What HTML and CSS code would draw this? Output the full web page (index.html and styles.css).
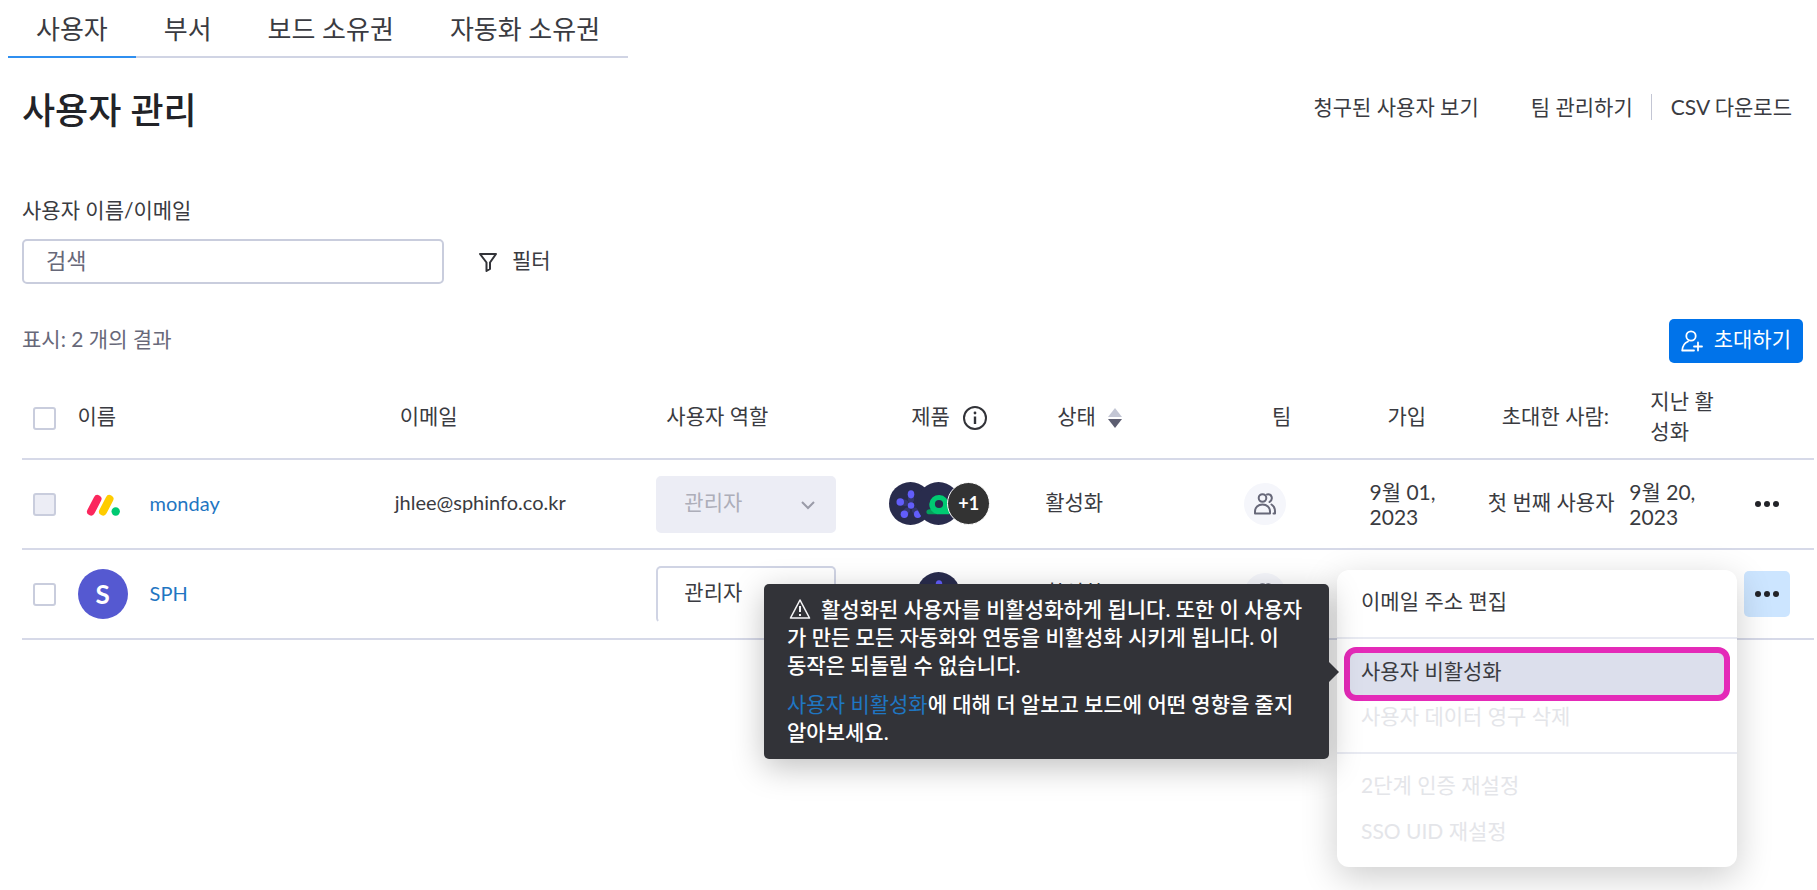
FILE: index.html
```html
<!DOCTYPE html>
<html lang="ko">
<head>
<meta charset="utf-8">
<title>사용자 관리</title>
<link rel="stylesheet" href="styles.css">
</head>
<body>
<svg class="defs" aria-hidden="true">
  <symbol id="flower" viewBox="0 0 42 42">
    <circle cx="21" cy="21" r="21" fill="#292c4d"/>
    <g stroke-width="6" stroke-linecap="round" stroke="#34376f">
      <path d="M21.500 13v4M12 19.500l4 1M15.500 31l2-3M27.500 31l-2-3"/>
    </g>
    <g fill="#625dfb">
      <ellipse cx="21.500" cy="12" rx="3.200" ry="4"/>
      <circle cx="11" cy="19.500" r="3.700"/>
      <circle cx="21.500" cy="23" r="3.200"/>
      <circle cx="15" cy="31.500" r="3.600"/>
      <circle cx="28" cy="31.500" r="3.600"/>
    </g>
  </symbol>
  <symbol id="people" viewBox="0 0 24 24">
    <g fill="none" stroke="#676879" stroke-width="2" stroke-linejoin="round" stroke-linecap="round">
      <circle cx="9.500" cy="6" r="3.800"/>
      <path d="M2 21.500v-2c0-4 3-7 7.500-7s7.500 3 7.500 7v2zM14 2.400c5-1 6.500 5 2.500 7.600M18.500 12.500c2.500 1.500 3.500 3.800 3.500 7v2h-1.500"/>
    </g>
  </symbol>
</svg>

<nav class="tabs">
  <a class="tab tab-active" href="#users">사용자</a>
  <a class="tab" href="#departments">부서</a>
  <a class="tab" href="#boards">보드 소유권</a>
  <a class="tab" href="#automations">자동화 소유권</a>
</nav>

<main class="page">
  <header class="head">
    <h1 class="title">사용자 관리</h1>
    <div class="links">
      <a class="link link-billed" href="#billed">청구된 사용자 보기</a>
      <a class="link" href="#teams">팀 관리하기</a>
      <a class="link link-csv" href="#csv">CSV 다운로드</a>
    </div>
  </header>

  <section class="search">
    <label class="search-label" for="q">사용자 이름/이메일</label>
    <div class="search-row">
      <input class="search-input" id="q" type="text" placeholder="검색">
      <button class="filter" type="button">
        <svg width="20" height="22" viewBox="0 0 20 22" fill="none" stroke="#323338" stroke-width="2" stroke-linejoin="round"><path d="M2 3h16l-6 8.500v6.500l-3.500 2v-8.500z"/></svg>
        필터
      </button>
    </div>
  </section>

  <div class="results">
    <p class="count">표시: 2 개의 결과</p>
    <button class="invite" type="button">
      <svg width="22" height="22" viewBox="0 0 22 22" fill="none" stroke="#fff" stroke-width="1.800" stroke-linecap="round" stroke-linejoin="round"><circle cx="10" cy="6" r="4.700"/><path d="M7 11.500C3.500 13 1.500 16 1.200 20.500H13M17 12.500v8M13 16.500h8"/></svg>
      초대하기
    </button>
  </div>

  <table class="users">
    <colgroup>
      <col class="c-check"><col class="c-name"><col class="c-email"><col class="c-role"><col class="c-product"><col class="c-status"><col class="c-team"><col class="c-joined"><col class="c-inviter"><col class="c-last"><col class="c-menu">
    </colgroup>
    <thead>
      <tr>
        <th class="check-cell"><input class="check" type="checkbox" aria-label="모두 선택"></th>
        <th>이름</th>
        <th class="h-email">이메일</th>
        <th class="h-role">사용자 역할</th>
        <th class="h-product"><span class="with-icon">제품
          <svg width="26" height="26" viewBox="0 0 26 26" fill="none" stroke="#323338" stroke-width="2"><circle cx="13" cy="13" r="11"/><path d="M13 11.500v7.500" stroke-width="2.400"/><circle cx="13" cy="8" r="1.400" fill="#323338" stroke="none"/></svg></span></th>
        <th class="h-status"><span class="with-icon">상태
          <svg width="14" height="20" viewBox="0 0 14 20"><path d="M0 9 7 0l7 9z" fill="#c3c6d4"/><path d="M0 11h14l-7 9z" fill="#5c5d70"/></svg></span></th>
        <th class="h-team">팀</th>
        <th class="h-joined">가입</th>
        <th class="h-inviter">초대한 사람:</th>
        <th class="h-last">지난 활<br>성화</th>
        <th></th>
      </tr>
    </thead>
    <tbody>
      <tr>
        <td class="check-cell"><input class="check" type="checkbox" aria-label="monday 선택" disabled></td>
        <td><div class="person">
          <svg class="logo" width="50" height="50" viewBox="0 0 50 50" fill="none" stroke-width="8" stroke-linecap="round"><path d="M13 32.500 19.500 20" stroke="#fb275d"/><path d="M25 32.500 31.500 20" stroke="#fc0"/><circle cx="37.700" cy="32.500" r="4.200" fill="#00ca72"/></svg>
          <a class="name" href="#monday">monday</a></div></td>
        <td class="text email">jhlee@sphinfo.co.kr</td>
        <td><div class="role">
          <select class="role-select" aria-label="monday 역할" disabled><option>관리자</option></select>
          <svg class="chevron" width="14" height="9" viewBox="0 0 14 9" fill="none" stroke="#9a9ba8" stroke-width="2"><path d="m1 1 6 6 6-6"/></svg></div></td>
        <td><div class="products">
          <svg class="product" viewBox="0 0 42 42"><use href="#flower"/></svg>
          <svg class="product" viewBox="0 0 42 42"><circle cx="21" cy="21" r="21" fill="#292c4d"/><path d="M11 31.500c-3-1-2-5 1-5h8v5z" fill="#04a05c"/><path d="M32 31.500H20a9.500 9.500 0 1 1 11-9.500z" fill="#00ca72"/><circle cx="21.500" cy="21.500" r="4" fill="#292c4d"/></svg>
          <span class="more">+1</span></div></td>
        <td class="text">활성화</td>
        <td><span class="team"><svg width="24" height="24"><use href="#people"/></svg></span></td>
        <td class="date">9월 01,<br>2023</td>
        <td class="text">첫 번째 사용자</td>
        <td class="date">9월 20,<br>2023</td>
        <td><button class="dots" type="button" aria-label="메뉴"><svg width="26" height="8" viewBox="0 0 26 8" fill="#222328"><circle cx="4" cy="4" r="3"/><circle cx="13" cy="4" r="3"/><circle cx="22" cy="4" r="3"/></svg></button></td>
      </tr>
      <tr>
        <td class="check-cell"><input class="check" type="checkbox" aria-label="SPH 선택"></td>
        <td><div class="person"><span class="avatar">S</span><a class="name" href="#sph">SPH</a></div></td>
        <td></td>
        <td><div class="role"><select class="role-select" aria-label="SPH 역할"><option>관리자</option></select></div></td>
        <td><div class="products products-one"><svg class="product" viewBox="0 0 42 42"><use href="#flower"/></svg></div></td>
        <td class="text">활성화</td>
        <td><span class="team"><svg width="24" height="24"><use href="#people"/></svg></span></td>
        <td></td>
        <td></td>
        <td></td>
        <td>
          <div class="actions">
            <button class="dots dots-open" type="button" aria-label="메뉴"><svg width="26" height="8" viewBox="0 0 26 8" fill="#222328"><circle cx="4" cy="4" r="3"/><circle cx="13" cy="4" r="3"/><circle cx="22" cy="4" r="3"/></svg></button>
            <div class="menu">
              <div class="group group-first"><button class="item" type="button">이메일 주소 편집</button></div>
              <div class="group group-middle">
                <div class="item-wrap">
                  <button class="item item-marked" type="button">사용자 비활성화</button>
                  <div class="tip" role="tooltip">
                    <p class="tip-text"><svg class="warn" width="22" height="22" viewBox="0 0 22 22" fill="none" stroke="#f4f4f6" stroke-width="1.600" stroke-linejoin="round"><path d="M11 2 20.500 20h-19z"/><path d="M11 8v6M11 16v2" stroke-width="2"/></svg>활성화된 사용자를 비활성화하게 됩니다. 또한 이 사용자<br>가 만든 모든 자동화와 연동을 비활성화 시키게 됩니다. 이<br>동작은 되돌릴 수 없습니다.</p>
                    <p class="tip-text"><a class="tip-link" href="#deactivate">사용자 비활성화</a>에 대해 더 알보고 보드에 어떤 영향을 줄지<br>알아보세요.</p>
                  </div>
                </div>
                <button class="item" type="button" disabled>사용자 데이터 영구 삭제</button>
              </div>
              <div class="group group-last">
                <button class="item" type="button" disabled>2단계 인증 재설정</button>
                <button class="item" type="button" disabled>SSO UID 재설정</button>
              </div>
            </div>
          </div>
        </td>
      </tr>
    </tbody>
  </table>
</main>
</body>
</html>
```

FILE: styles.css
```css
* { box-sizing: border-box; }

body {
  margin: 0;
  min-height: 100vh;
  background: #fff;
  color: #3a3b41;
  font: 400 21px/30px Lato, "Noto Sans CJK KR", sans-serif;
}

button, input, select { font: inherit; color: inherit; }
button { border: 0; padding: 0; background: none; }
p, h1 { margin: 0; }
a { color: inherit; text-decoration: none; }
.defs { display: none; }

.tabs {
  display: inline-flex;
  margin-left: 8px;
}
.tab {
  padding: 11px 28px 8px;
  border-bottom: 2px solid #d0d4e4;
  font-size: 26px;
  line-height: 37px;
}
.tab-active { border-color: #2f8ff0; }

.page { padding: 0 3px 0 22px; }

.head {
  display: flex;
  justify-content: space-between;
  align-items: center;
  margin-top: 24px;
  padding-right: 22px;
}
.title { color: #222328; font-size: 36px; line-height: 56px; font-weight: 500; }
.links { display: flex; align-items: center; margin-bottom: 6px; }
.link-billed { margin-right: 52px; }
.link-csv {
  margin-left: 18px;
  padding-left: 19px;
  border-left: 1px solid #c3c6d4;
  line-height: 26px;
}

.search { margin-top: 57px; }
.search-label { display: block; }
.search-row {
  display: flex;
  align-items: center;
  gap: 34px;
  margin-top: 14px;
}
.search-input {
  width: 422px;
  height: 45px;
  padding: 0 22px 2px;
  border: 2px solid #c9cddd;
  border-radius: 5px;
  font-size: 22px;
}
.search-input::placeholder { color: #676879; opacity: 1; }
.filter { display: flex; align-items: center; gap: 14px; padding-bottom: 4px; }
.filter svg { margin-top: 4px; }

.results {
  display: flex;
  justify-content: space-between;
  align-items: center;
  margin-top: 35px;
  padding-right: 11px;
}
.count { padding-bottom: 4px; color: #676879; }
.invite {
  display: flex;
  align-items: center;
  gap: 11px;
  height: 44px;
  padding: 0 12px 4px;
  border-radius: 5px;
  background: #0073ea;
  color: #fff;
}
.invite svg { margin-top: 4px; }

.users {
  width: 100%;
  margin-top: 15px;
  table-layout: fixed;
  border-collapse: separate;
  border-spacing: 0;
}
.c-check { width: 3.1%; }
.c-name { width: 17.7%; }
.c-email { width: 14.6%; }
.c-role { width: 13%; }
.c-product { width: 8.7%; }
.c-status { width: 11.1%; }
.c-team { width: 7%; }
.c-joined { width: 6.6%; }
.c-inviter { width: 7.9%; }
.c-last { width: 6.4%; }
.c-menu { width: 3.9%; }

th, td {
  height: 90px;
  padding: 0;
  border-bottom: 2px solid #d6d9e8;
  text-align: left;
  vertical-align: middle;
  font-weight: 400;
  white-space: nowrap;
}
th { height: 82px; padding-bottom: 5px; }
th.h-email { padding-left: 5px; }
th.h-role { padding-left: 10px; }
th.h-product { padding-left: 22px; }
th.h-status { padding-left: 12px; }
th.h-team { padding-left: 28px; }
th.h-joined { padding-left: 18px; }
th.h-inviter { padding-left: 14px; }
th.h-last { padding-left: 21px; }
.check-cell { padding: 0 0 0 11px; }
td.text { padding-bottom: 5px; }
.with-icon { display: flex; align-items: center; gap: 12px; }
.with-icon svg { margin-top: 4px; }

.check {
  appearance: none;
  display: block;
  width: 23px;
  height: 23px;
  margin: 0;
  border: 2px solid #c9cddd;
  border-radius: 3px;
  background: #fff;
}
.check:disabled { background: #ecedf5; }

.person { display: flex; align-items: center; gap: 22px; }
.avatar {
  width: 50px;
  height: 50px;
  border-radius: 50%;
  background: #5559d1;
  color: #fff;
  font-size: 26px;
  font-weight: 700;
  line-height: 50px;
  text-align: center;
}
.name { padding-bottom: 3px; color: #1f76c2; font-size: 20px; }
.email { font-size: 20px; }

.role { position: relative; width: 180px; }
.role-select {
  appearance: none;
  display: block;
  width: 100%;
  height: 57px;
  padding: 0 26px 4px;
  border: 2px solid #d0d4e4;
  border-bottom-color: transparent;
  border-radius: 5px;
  background: #fff;
}
.role-select:disabled {
  border-color: #ecedf5;
  background: #ecedf5;
  color: #adaeb9;
  opacity: 1;
}
.chevron { position: absolute; right: 21px; top: 25px; }

.products { display: flex; align-items: center; padding-bottom: 2px; }
.products-one { padding-left: 28px; }
.product { width: 43px; height: 43px; flex: none; }
.product + .product { margin-left: -15px; }
.more {
  width: 43px;
  height: 43px;
  margin-left: -13px;
  border: 1px solid #fff;
  border-radius: 50%;
  background: #333;
  color: #fff;
  font-size: 18px;
  font-weight: 700;
  line-height: 41px;
  text-align: center;
  z-index: 1;
}

.team {
  display: flex;
  align-items: center;
  justify-content: center;
  width: 42px;
  height: 42px;
  border-radius: 50%;
  background: #f5f6fb;
}
.date { line-height: 25px; }

.actions { position: relative; width: 46px; }
.dots {
  display: flex;
  align-items: center;
  justify-content: center;
  width: 46px;
  height: 46px;
  border-radius: 5px;
}
.dots-open { background: #cce5ff; }

.menu {
  position: absolute;
  right: calc(100% + 7px);
  top: -1px;
  width: 400px;
  border-radius: 12px;
  background: #fff;
  box-shadow: 0 10px 36px rgba(0, 0, 0, 0.2);
}
.group { padding: 8px 7px; }
.group + .group { border-top: 2px solid #e8eaf2; }
.group-first { padding-bottom: 13px; }
.group-middle { padding-bottom: 13px; }
.group-last { padding-bottom: 13px; }
.item {
  display: block;
  width: 100%;
  height: 46px;
  padding: 0 17px;
  border-radius: 12px;
  text-align: left;
}
.item:disabled { color: #e4e5e9; }
.item-wrap { position: relative; height: 46px; }
.item-marked {
  height: 54px;
  padding: 0 11px 6px;
  border: 6px solid #e42ab8;
  background: #dcdfec;
}

.tip {
  position: absolute;
  right: calc(100% + 15px);
  top: -63px;
  width: 565px;
  padding: 11px 23px 13px;
  border-radius: 5px;
  background: #323338;
  color: #fff;
  font-weight: 500;
  line-height: 28px;
  box-shadow: 0 8px 32px rgba(0, 0, 0, 0.25);
}
.tip::after {
  content: "";
  position: absolute;
  left: 100%;
  top: 78px;
  border: 10px solid transparent;
  border-left-color: #323338;
  border-right: 0;
}
.tip-text + .tip-text { margin-top: 11px; }
.tip-link { color: #1f76c2; font-weight: 400; }
.warn { margin: 0 10px 0 2px; vertical-align: -3px; }
```
